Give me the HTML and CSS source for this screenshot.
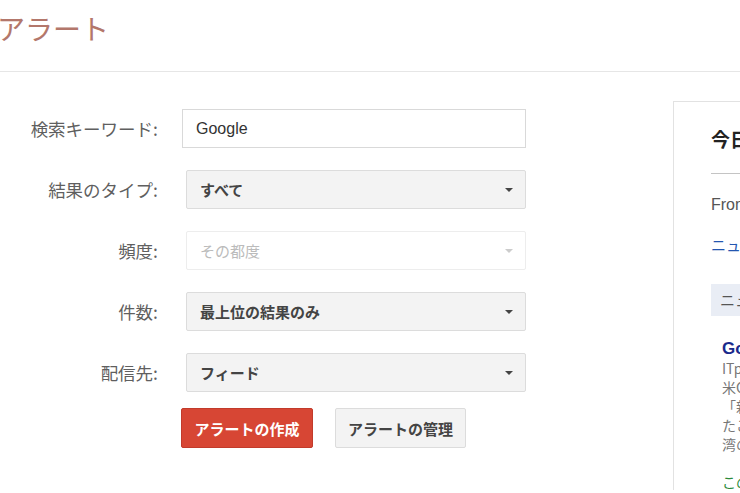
FILE: index.html
```html
<!DOCTYPE html>
<html lang="ja">
<head>
  <meta charset="UTF-8">
  <title>アラート</title>
  <link rel="stylesheet" href="styles.css">
</head>
<body>

<header>
  <h1>アラート</h1>
</header>

<div class="main">
  <div class="alert-form">
    <div class="row">
      <label>検索キーワード:</label>
      <input type="text" class="keyword" value="Google">
    </div>
    <div class="row">
      <label>結果のタイプ:</label>
      <div class="select">すべて<span class="arrow"></span></div>
    </div>
    <div class="row">
      <label>頻度:</label>
      <div class="select disabled">その都度<span class="arrow"></span></div>
    </div>
    <div class="row">
      <label>件数:</label>
      <div class="select">最上位の結果のみ<span class="arrow"></span></div>
    </div>
    <div class="row">
      <label>配信先:</label>
      <div class="select">フィード<span class="arrow"></span></div>
    </div>
    <div class="buttons">
      <button class="btn red">アラートの作成</button>
      <button class="btn">アラートの管理</button>
    </div>
  </div>

  <div class="preview">
    <h2>今日のアラートのプレビュー</h2>
    <p class="from">From: Googleアラート</p>
    <a class="link" href="#">ニュース</a>
    <div class="section">ニュース</div>
    <div class="item">
      <a class="item-title" href="#">Google、新サービスを発表</a>
      <span class="line">ITpro - 2時間前</span>
      <span class="line">米Googleは現地時間の発表で、</span>
      <span class="line">「新しい検索体験」を提供すると</span>
      <span class="line">たことを明らかにした。同社は台</span>
      <span class="line">湾のデータセンターを拡張し、</span>
      <span class="line green">この記事の関連ニュース</span>
    </div>
  </div>
</div>

</body>
</html>
```

FILE: styles.css
```css
body {
  margin: 0;
  font-family: "Noto Sans CJK JP", "Liberation Sans", sans-serif;
  background: #fff;
  overflow: hidden;
  height: 493px;
}
header {
  height: 71px;
  border-bottom: 1px solid #e6e6e6;
}
h1 {
  margin: 0 0 0 -3px;
  padding-top: 9px;
  font-size: 28px;
  line-height: 38px;
  font-weight: normal;
  color: #b3776b;
}
.main {
  display: flex;
  padding-top: 33px;
}
.alert-form {
  width: 526px;
  margin-top: 4px;
  flex-shrink: 0;
}
.row {
  display: flex;
  align-items: center;
  height: 39px;
  margin-bottom: 22px;
}
.row label {
  width: 158px;
  margin-right: 24px;
  text-align: right;
  font-size: 17.5px;
  color: #5f5f5f;
}
.keyword {
  box-sizing: border-box;
  width: 344px;
  height: 39px;
  border: 1px solid #d9d9d9;
  padding: 0 13px;
  font-family: "Liberation Sans", sans-serif;
  font-size: 16px;
  color: #333;
  outline: none;
}
.select {
  box-sizing: border-box;
  position: relative;
  width: 340px;
  height: 39px;
  margin-left: 4px;
  padding: 0 13px;
  line-height: 37px;
  border: 1px solid #dcdcdc;
  border-radius: 2px;
  background: #f3f3f3;
  font-size: 15px;
  font-weight: bold;
  color: #444;
}
.select.disabled {
  background: #fff;
  border-color: #ededed;
  color: #bbb;
  font-weight: normal;
}
.arrow {
  position: absolute;
  right: 12px;
  top: 17px;
  border-left: 4px solid transparent;
  border-right: 4px solid transparent;
  border-top: 4px solid #444;
}
.disabled .arrow {
  border-top-color: #ccc;
}
.buttons {
  display: flex;
  gap: 22px;
  margin-top: -6px;
  padding-left: 181px;
}
.btn {
  box-sizing: border-box;
  height: 40px;
  width: 131px;
  border: 1px solid #dcdcdc;
  border-radius: 2px;
  background: #f3f3f3;
  font-family: inherit;
  font-size: 15px;
  font-weight: bold;
  color: #444;
  padding: 0;
}
.btn.red {
  width: 132px;
  background: #d74634;
  border-color: #c23b2b;
  color: #fff;
}
.preview {
  box-sizing: border-box;
  margin-left: 147px;
  flex: 1;
  min-width: 0;
  height: 389px;
  border: 1px solid #e2e2e2;
  border-right: none;
  border-bottom: none;
  padding: 24px 0 0 37px;
  margin-top: -4px;
  overflow: hidden;
  white-space: nowrap;
}
.preview h2 {
  margin: 0;
  font-size: 19px;
  line-height: 26px;
  color: #222;
  padding-bottom: 21px;
  border-bottom: 1px solid #c4c4c4;
}
.from {
  margin: 21px 0 0;
  font-family: "Liberation Sans", "Noto Sans CJK JP", sans-serif;
  font-size: 16px;
  line-height: 20px;
  color: #555;
}
.link {
  display: block;
  margin-top: 20px;
  font-size: 15px;
  line-height: 20px;
  color: #2456b0;
  text-decoration: none;
}
.section {
  margin-top: 29px;
  height: 32px;
  line-height: 32px;
  padding-left: 9px;
  background: #e9edf5;
  font-size: 15px;
  color: #555;
}
.item {
  margin-top: 23px;
  padding-left: 11px;
}
.item-title {
  display: block;
  font-family: "Liberation Sans", "Noto Sans CJK JP", sans-serif;
  font-size: 17px;
  line-height: 20px;
  font-weight: bold;
  color: #1a2a8c;
  text-decoration: none;
}
.line {
  display: block;
  font-size: 14px;
  line-height: 19px;
  color: #777;
}
.line.green {
  margin-top: 19px;
  color: #2a8a3a;
}
```
